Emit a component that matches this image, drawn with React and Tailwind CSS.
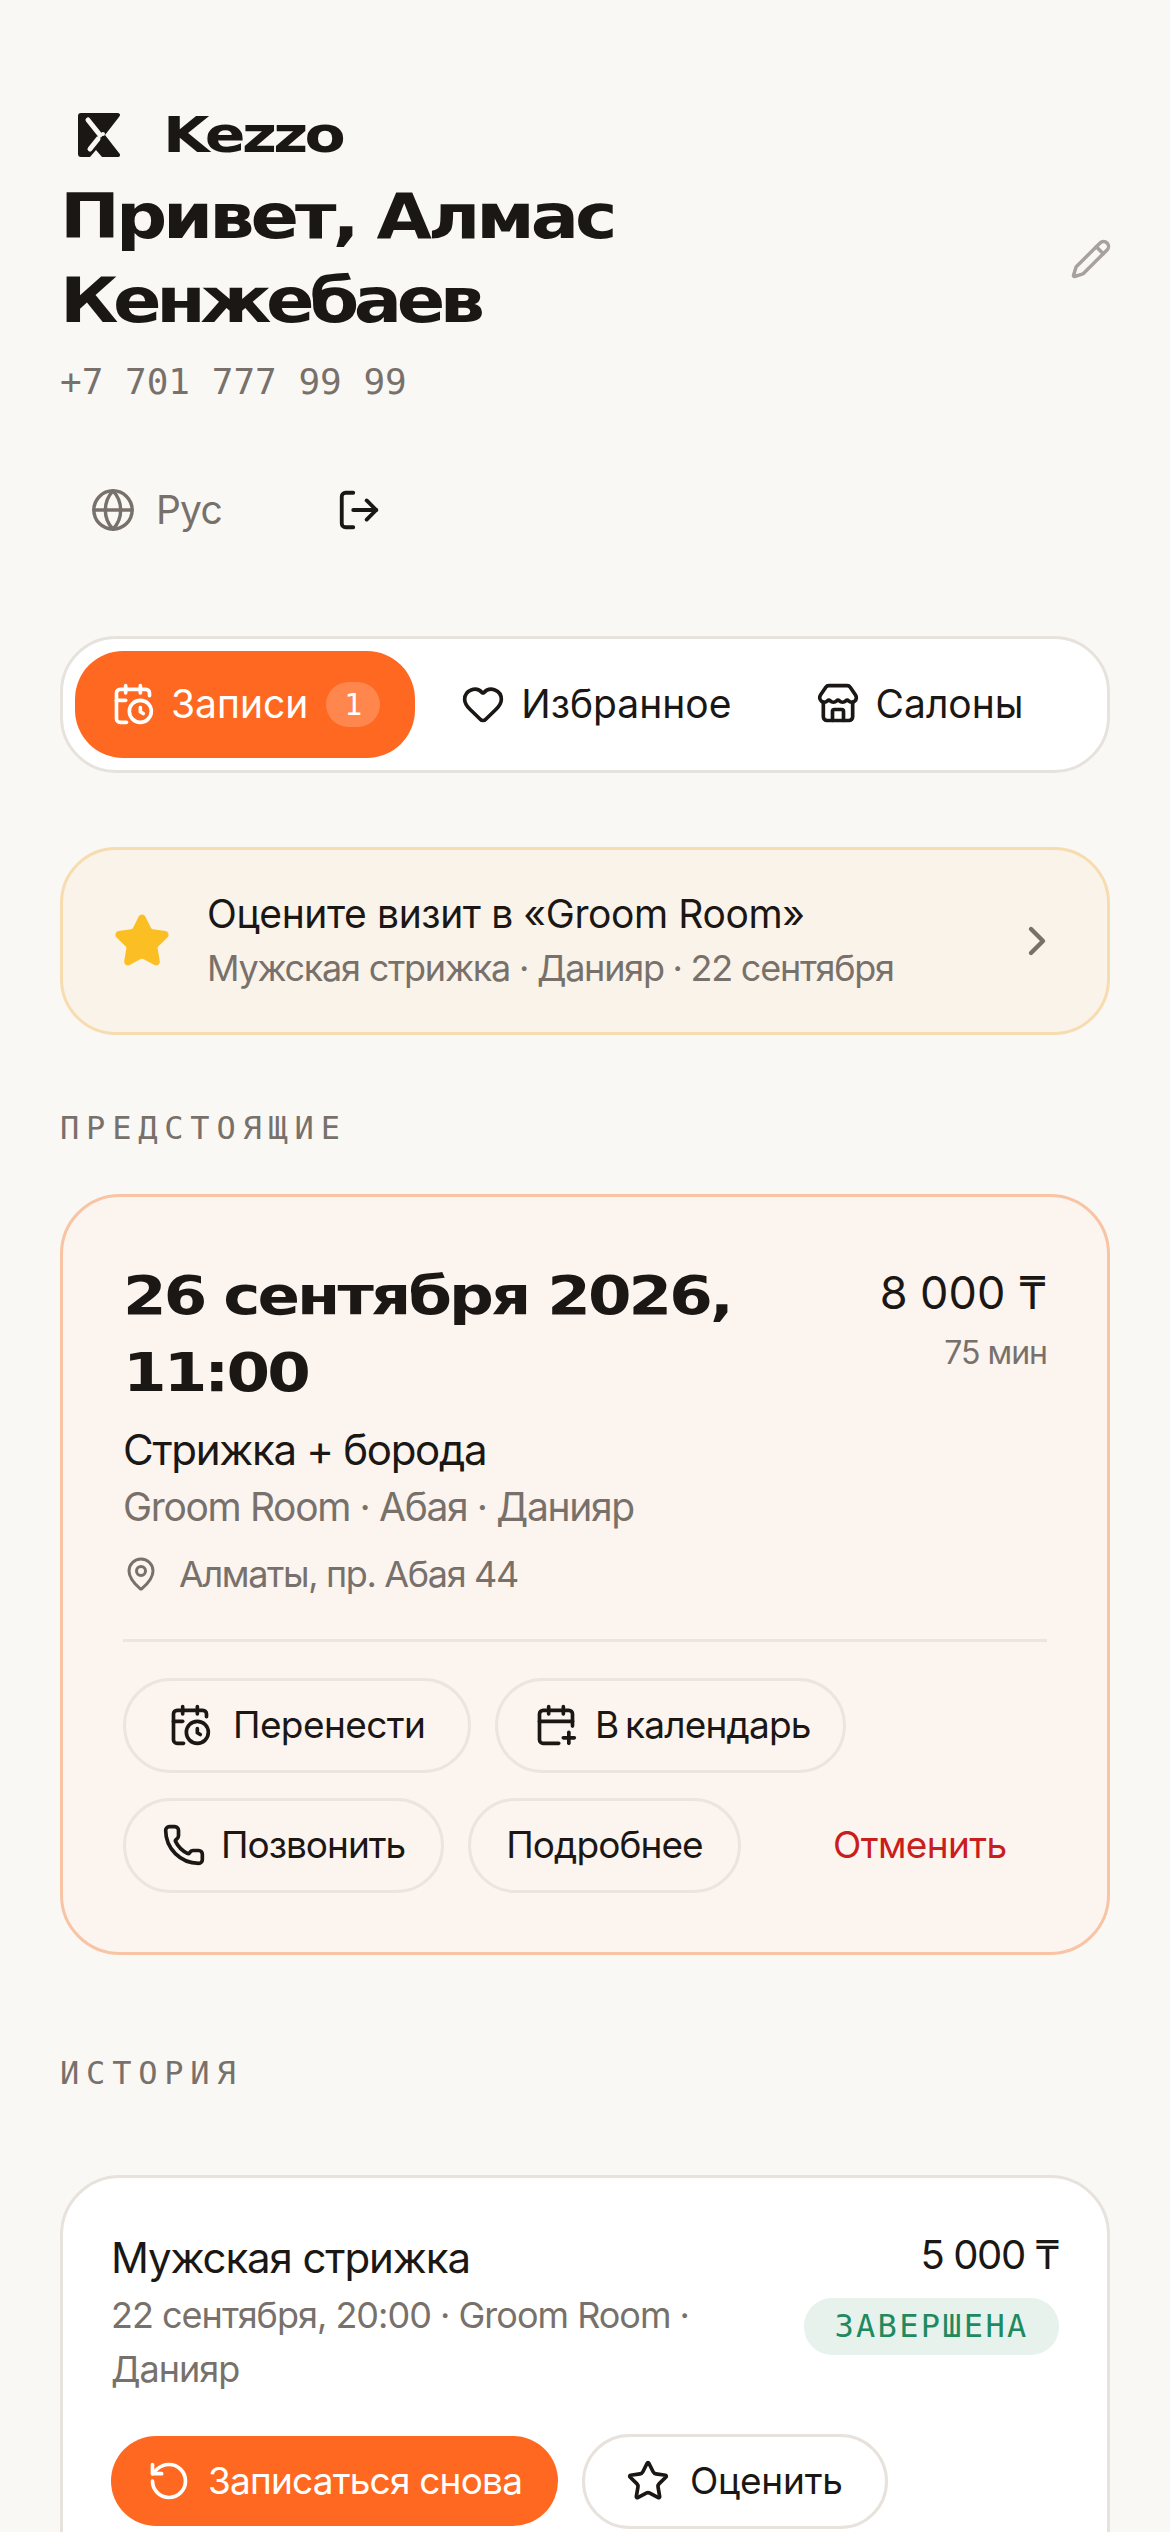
import { CalendarClock, CalendarPlus, ChevronRight, Globe, Heart, LogOut, MapPin, Pencil, Phone, RotateCcw, Star, Store } from 'lucide-react'

const sans = "font-['Inter',sans-serif]"
const mono = "font-['DejaVu_Sans_Mono',monospace]"
const wide = "font-['DejaVu_Sans',sans-serif]"

function Logo() {
  return (
    <svg width="42" height="44" viewBox="0 0 42 44" className="shrink-0">
      <path d="M3 0h36c3 0 4 2 2 4L27 22l14 18c2 2 1 4-2 4H24l-6-7-6 7H3c-2 0-3-1-3-3V3c0-2 1-3 3-3z" fill="#1a1715" />
      <path d="M10 7l12 15M20 26l-8 10" stroke="#faf8f5" strokeWidth="5" strokeLinecap="round" fill="none" />
      <circle cx="25" cy="21" r="2" fill="#faf8f5" />
    </svg>
  )
}

function Tab({ icon: Icon, label, active, badge }) {
  return (
    <div className={`flex h-[107px] items-center gap-4 rounded-[48px] pl-[36px] text-[39px] ${active ? 'bg-[#ff6820] pr-[35px] text-white' : 'pr-[38px] text-[#1a1715]'}`}>
      <Icon size={44} strokeWidth={2} />
      <span>{label}</span>
      {badge && (
        <span className={`${mono} ml-[2px] flex h-[45px] w-[54px] items-center justify-center rounded-[23px] bg-white/20 text-[30px]`}>{badge}</span>
      )}
    </div>
  )
}

function Chip({ icon: Icon, label, className = '' }) {
  return (
    <div className={`flex h-[95px] items-center rounded-[48px] border-[3px] border-[#ece4de] text-[37px] text-[#1a1715] ${className}`}>
      {Icon && <Icon size={44} strokeWidth={2} />}
      <span>{label}</span>
    </div>
  )
}

function SectionLabel({ children, className = '' }) {
  return <div className={`${mono} text-[32px] leading-[40px] tracking-[6.8px] text-[#78716b] ${className}`}>{children}</div>
}

export default function App() {
  return (
    <div className={`${sans} h-[2532px] overflow-hidden bg-[#faf8f5] px-[60px] pt-[113px] text-[#1a1715]`}>
      <div className="ml-[18px] flex h-[44px] items-center gap-[43px]">
        <Logo />
        <span className={`${wide} origin-left scale-x-[1.2] text-[50px] font-bold leading-none tracking-[-3px]`}>Kezzo</span>
      </div>

      <div className="mt-[18px] flex items-center justify-between">
        <div>
          <h1 className={`${wide} origin-left scale-x-[1.155] text-[62px] font-bold leading-[84px] tracking-[-3.5px]`}>
            Привет, Алмас<br /><span className="tracking-[-4.7px]">Кенжебаев</span>
          </h1>
          <div className={`${mono} mt-[17px] text-[36px] leading-[44px] text-[#78716b]`}>+7 701 777 99 99</div>
        </div>
        <Pencil size={42} strokeWidth={2} className="-mr-[2px] mb-[61px] text-[#a8a29e]" />
      </div>

      <div className="mt-[77px] flex items-center">
        <Globe size={46} strokeWidth={1.8} className="ml-[30px] text-[#78716b]" />
        <span className="ml-[20px] text-[39px] tracking-[-0.8px] text-[#78716b]">Рус</span>
        <LogOut size={46} strokeWidth={2} className="ml-[114px] text-[#1a1715]" />
      </div>

      <div className="mt-[96px] flex h-[137px] items-center gap-[10px] rounded-[56px] border-[3px] border-[#e7e2dc] bg-white px-3">
        <Tab icon={CalendarClock} label="Записи" badge="1" active />
        <Tab icon={Heart} label="Избранное" />
        <Tab icon={Store} label="Салоны" />
      </div>

      <div className="mt-[74px] flex h-[188px] items-center rounded-[56px] border-[3px] border-[#f6dcae] bg-[#faf3ea] pl-[50px] pr-[46px]">
        <Star size={58} fill="#fbbf24" stroke="#fbbf24" strokeWidth={2} strokeLinejoin="round" className="shrink-0" />
        <div className="ml-[36px] flex-1">
          <div className="text-[39px] leading-[54px] tracking-[-0.4px]">Оцените визит в «Groom Room»</div>
          <div className="text-[36px] leading-[54px] tracking-[-1.25px] text-[#78716b]">Мужская стрижка · Данияр · 22 сентября</div>
        </div>
        <ChevronRight size={48} strokeWidth={2.2} className="text-[#78716b]" />
      </div>

      <SectionLabel className="mt-[73px]">ПРЕДСТОЯЩИЕ</SectionLabel>

      <div className="mt-[46px] h-[761px] rounded-[60px] border-[3px] border-[#f8c4a4] bg-[#fcf4ef] px-[60px] pt-[60px]">
        <div className="flex justify-between">
          <div className={`${wide} origin-left scale-x-[1.16] text-[54px] font-bold leading-[77px] tracking-[-2.5px]`}>26 сентября 2026,<br />11:00</div>
          <div className="pt-[3px] text-right">
            <div className="text-[45px] leading-[66px]">8 000 ₸</div>
            <div className="mt-[6px] text-[32px] leading-[42px] tracking-[-1px] text-[#78716b]">75 мин</div>
          </div>
        </div>
        <div className="mt-[9px] text-[42px] leading-[60px] tracking-[-1.3px]">Стрижка + борода</div>
        <div className="text-[39px] leading-[54px] tracking-[-1.35px] text-[#78716b]">Groom Room · Абая · Данияр</div>
        <div className="mt-[13px] flex items-center gap-[20px] text-[36px] leading-[54px] tracking-[-1.35px] text-[#78716b]">
          <MapPin size={36} strokeWidth={2} />
          <span>Алматы, пр. Абая 44</span>
        </div>
        <div className="mt-[38px] border-t-[3px] border-[#ece4de]" />
        <div className="mt-[36px] flex gap-6">
          <Chip icon={CalendarClock} label="Перенести" className="w-[348px] gap-[21px] pl-[42px] tracking-[-0.6px]" />
          <Chip icon={CalendarPlus} label="В календарь" className="w-[351px] gap-[17px] pl-[36px] tracking-[-0.8px] [word-spacing:-3px]" />
        </div>
        <div className="mt-[25px] flex items-center gap-6">
          <Chip icon={Phone} label="Позвонить" className="w-[321px] gap-[15px] pl-[36px] tracking-[-1px]" />
          <Chip label="Подробнее" className="w-[273px] justify-center tracking-[-0.9px]" />
          <span className="ml-[68px] text-[37px] tracking-[-0.6px] text-[#c81e1e]">Отменить</span>
        </div>
      </div>

      <SectionLabel className="mt-[98px]">ИСТОРИЯ</SectionLabel>

      <div className="mt-[82px] h-[500px] rounded-[60px] border-[3px] border-[#e7e2dc] bg-white px-[48px] pt-[50px]">
        <div className="flex justify-between">
          <div className="w-[640px]">
            <div className="text-[42px] leading-[60px] tracking-[-1.1px]">Мужская стрижка</div>
            <div className="text-[36px] leading-[54px] tracking-[-1px] text-[#78716b]">22 сентября, 20:00 · Groom Room · Данияр</div>
          </div>
          <div className="flex flex-col items-end">
            <div className="text-[40px] leading-[54px] tracking-[-1.4px]">5 000 ₸</div>
            <div className={`${mono} mt-[16px] flex h-[57px] w-[255px] items-center justify-center rounded-[28px] bg-[#e7f2ed] text-[32px] tracking-[2.3px] text-[#1f8a5f]`}>ЗАВЕРШЕНА</div>
          </div>
        </div>
        <div className="mt-[38px] flex items-center gap-6">
          <div className="flex h-[90px] w-[447px] items-center gap-[17px] rounded-[45px] bg-[#ff6820] pl-[36px] text-[37px] tracking-[-0.8px] text-white">
            <RotateCcw size={44} strokeWidth={2} />
            <span>Записаться снова</span>
          </div>
          <div className="flex h-[95px] w-[306px] items-center gap-[20px] rounded-[48px] border-[3px] border-[#e7e2dc] pl-[41px] text-[37px] tracking-[-0.2px]">
            <Star size={44} strokeWidth={2} />
            <span>Оценить</span>
          </div>
        </div>
      </div>
    </div>
  )
}
